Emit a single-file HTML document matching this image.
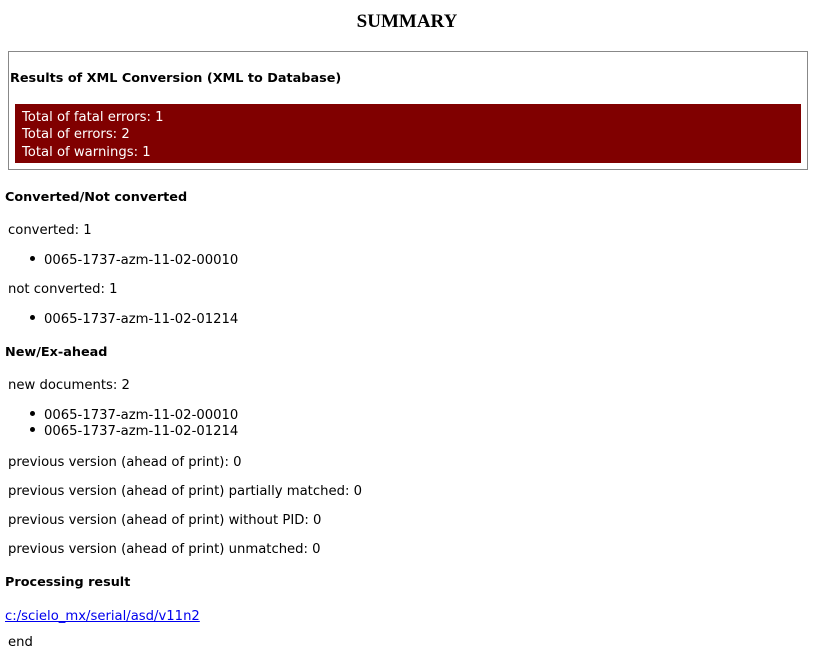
<!DOCTYPE html>
<html><head><meta charset="utf-8"><style>
body{margin:0;width:814px;height:653px;background:#fff;position:relative;font-family:"DejaVu Sans","Liberation Sans",sans-serif;font-size:13.2px;color:#000}
.a{position:absolute;line-height:16px;white-space:nowrap}
.b{font-weight:bold;font-size:12.8px}
.d{position:absolute;width:5px;height:5px;border-radius:50%;background:#000}
</style></head><body>
<div class="a" style="left:0;width:814px;text-align:center;top:12px;font-family:'Liberation Serif',serif;font-weight:bold;font-size:19px;line-height:20px">SUMMARY</div>
<div style="position:absolute;left:8px;top:51px;width:798px;height:117px;border:1px solid #888"></div>
<div class="a b" style="left:10px;top:71px">Results of XML Conversion (XML to Database)</div>
<div style="position:absolute;left:15px;top:104px;width:786px;height:59px;background:#800000"></div>
<div class="a" style="left:22px;top:110px;color:#fff">Total of fatal errors: 1</div>
<div class="a" style="left:22px;top:127px;color:#fff">Total of errors: 2</div>
<div class="a" style="left:22px;top:145px;color:#fff">Total of warnings: 1</div>
<div class="a b" style="left:5px;top:190px">Converted/Not converted</div>
<div class="a" style="left:8px;top:223px">converted: 1</div>
<div class="d" style="left:30px;top:256px"></div>
<div class="a" style="left:44px;top:253px">0065-1737-azm-11-02-00010</div>
<div class="a" style="left:8px;top:282px">not converted: 1</div>
<div class="d" style="left:30px;top:315px"></div>
<div class="a" style="left:44px;top:312px">0065-1737-azm-11-02-01214</div>
<div class="a b" style="left:5px;top:345px">New/Ex-ahead</div>
<div class="a" style="left:8px;top:378px">new documents: 2</div>
<div class="d" style="left:30px;top:411px"></div>
<div class="a" style="left:44px;top:408px">0065-1737-azm-11-02-00010</div>
<div class="d" style="left:30px;top:427px"></div>
<div class="a" style="left:44px;top:424px">0065-1737-azm-11-02-01214</div>
<div class="a" style="left:8px;top:455px">previous version (ahead of print): 0</div>
<div class="a" style="left:8px;top:484px">previous version (ahead of print) partially matched: 0</div>
<div class="a" style="left:8px;top:513px">previous version (ahead of print) without PID: 0</div>
<div class="a" style="left:8px;top:542px">previous version (ahead of print) unmatched: 0</div>
<div class="a b" style="left:5px;top:575px">Processing result</div>
<div class="a" style="left:5px;top:609px;color:#00e;text-decoration:underline">c:/scielo_mx/serial/asd/v11n2</div>
<div class="a" style="left:8px;top:635px">end</div>
</body></html>
